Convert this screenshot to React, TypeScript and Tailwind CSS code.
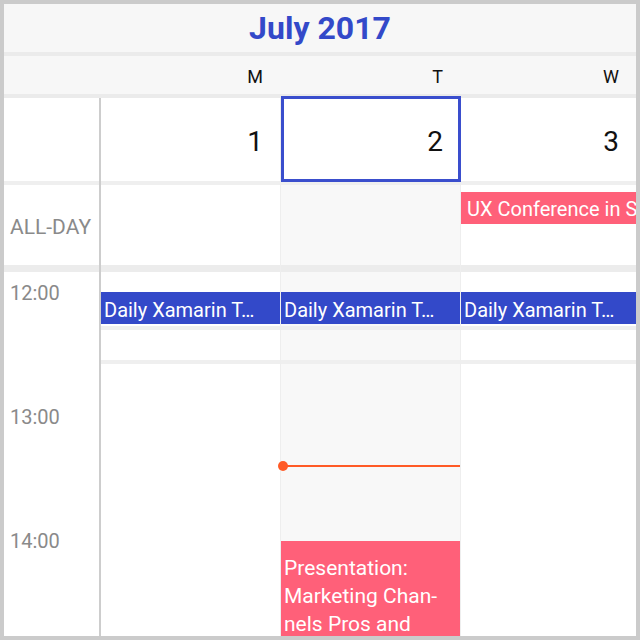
import React from "react";

const BLUE = "bg-[#3349c9]";

function DailyEvent() {
  return (
    <div className={`h-[32px] ${BLUE} flex items-center pl-[3px] pt-[3px] text-white text-[20px] whitespace-nowrap overflow-hidden`}>
      Daily Xamarin T…
    </div>
  );
}

function DayBodyTop() {
  return (
    <>
      <div className="h-[20px] shrink-0" />
      <DailyEvent />
      <div className="h-[2px] shrink-0" />
      <div className="h-[4px] shrink-0 bg-[#efefef]" />
      <div className="h-[30px] shrink-0" />
      <div className="h-[4px] shrink-0 bg-[#efefef]" />
    </>
  );
}

function DateCell({ n, selected }: { n: string; selected?: boolean }) {
  return (
    <div className="relative h-[83px] shrink-0 bg-white flex items-center justify-end pr-[17px] pt-[5px] text-[28px] text-[#111]">
      {n}
      {selected && (
        <div className="absolute -top-[2px] -bottom-[1px] left-0 -right-[1px] border-[3px] border-[#3a4ecd]" />
      )}
    </div>
  );
}

export default function App() {
  return (
    <div className="w-[640px] h-[640px] border-4 border-[#cbcbcb] bg-white flex flex-col overflow-hidden font-['Roboto',sans-serif]">
      <div className="h-[48px] shrink-0 bg-[#f7f7f7] flex items-center justify-center text-[32px] font-bold text-[#3349c9]">
        July 2017
      </div>
      <div className="h-[4px] shrink-0 bg-[#ebebeb]" />
      <div className="h-[38px] shrink-0 bg-[#f7f7f7] flex pt-[2px] text-[18px] text-[#111]">
        <div className="w-[97px] shrink-0" />
        <div className="w-[180px] shrink-0 flex items-center justify-end pr-[18px]">M</div>
        <div className="w-[180px] shrink-0 flex items-center justify-end pr-[18px]">T</div>
        <div className="flex-1 flex items-center justify-end pr-[17px]">W</div>
      </div>
      <div className="h-[4px] shrink-0 bg-[#ebebeb]" />
      <div className="flex-1 flex min-h-0">
        {/* time column */}
        <div className="w-[97px] shrink-0 border-r-2 border-[#cdcdcd] flex flex-col">
          <div className="h-[83px] shrink-0 bg-white" />
          <div className="h-[4px] shrink-0 bg-[#efefef]" />
          <div className="h-[80px] shrink-0 flex items-center pl-[6px] pt-[6px] text-[21px] text-[#8a8a8a]">ALL-DAY</div>
          <div className="h-[7px] shrink-0 bg-[#ececec]" />
          {["12:00", "13:00", "14:00"].map((t) => (
            <div key={t} className="h-[124px] shrink-0 pt-[9px] pl-[6px] text-[20px] leading-[24px] text-[#8a8a8a]">
              {t}
            </div>
          ))}
        </div>
        {/* Monday */}
        <div className="w-[180px] shrink-0 border-r border-[#eeeeee] flex flex-col">
          <DateCell n="1" />
          <div className="h-[4px] shrink-0 bg-[#efefef]" />
          <div className="h-[80px] shrink-0" />
          <div className="h-[7px] shrink-0 bg-[#ececec]" />
          <DayBodyTop />
        </div>
        {/* Tuesday */}
        <div className="w-[180px] shrink-0 border-r border-[#eeeeee] flex flex-col bg-[#f8f8f8]">
          <DateCell n="2" selected />
          <div className="h-[4px] shrink-0 bg-[#efefef]" />
          <div className="h-[80px] shrink-0" />
          <div className="h-[7px] shrink-0 bg-[#ececec]" />
          <DayBodyTop />
          <div className="relative h-[177px] shrink-0">
            <div className="absolute top-[101px] left-[2px] right-0 h-[2px] bg-[#ff5a26]" />
            <div className="absolute top-[97px] -left-[3px] w-[10px] h-[10px] rounded-full bg-[#ff5a26]" />
          </div>
          <div className="flex-1 bg-[#ff6079] pt-[13px] pl-[3px] text-white text-[21px] leading-[28px] overflow-hidden">
            Presentation:
            <br />
            Marketing Chan-
            <br />
            nels Pros and
          </div>
        </div>
        {/* Wednesday */}
        <div className="flex-1 flex flex-col min-w-0">
          <DateCell n="3" />
          <div className="h-[4px] shrink-0 bg-[#efefef]" />
          <div className="h-[80px] shrink-0 pt-[7px]">
            <div className="h-[32px] bg-[#ff6079] flex items-center pl-[6px] pt-[2px] text-white text-[20px] whitespace-nowrap overflow-hidden">
              UX Conference in S
            </div>
          </div>
          <div className="h-[7px] shrink-0 bg-[#ececec]" />
          <DayBodyTop />
        </div>
      </div>
    </div>
  );
}
